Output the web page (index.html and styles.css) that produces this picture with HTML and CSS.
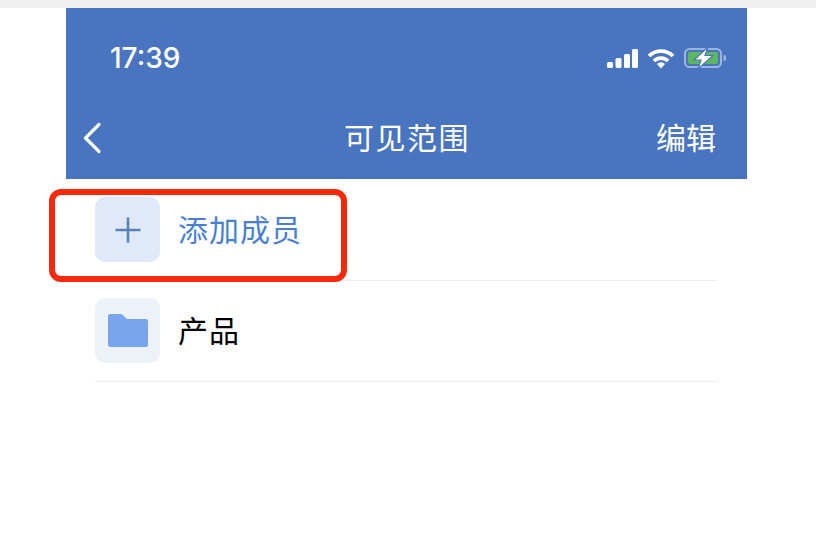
FILE: index.html
```html
<!DOCTYPE html>
<html lang="zh-CN">
<head>
    <meta charset="UTF-8">
    <meta name="viewport" content="width=device-width, initial-scale=1.0">
    <title>可见范围</title>
    <link rel="stylesheet" href="styles.css">
</head>
<body>
    <div class="top-strip"></div>
    <div class="phone">
        <div class="header">
            <div class="status-bar">
                <span class="time">17:39</span>
                <div class="status-icons">
                    <svg width="31" height="19" viewBox="0 0 31 19">
                        <rect x="0" y="13" width="6" height="6" rx="1.5" fill="#fff"/>
                        <rect x="8.5" y="9" width="6" height="10" rx="1.5" fill="#fff"/>
                        <rect x="17" y="5" width="6" height="14" rx="1.5" fill="#fff"/>
                        <rect x="25" y="0" width="6" height="19" rx="1.5" fill="#fff"/>
                    </svg>
                    <svg width="28" height="21" viewBox="0 0 28 21">
                        <path d="M2 8 A17 17 0 0 1 26 8" fill="none" stroke="#fff" stroke-width="3.8"/>
                        <path d="M7 13 A10 10 0 0 1 21 13" fill="none" stroke="#fff" stroke-width="3.8"/>
                        <path d="M10 16 A5.5 5.5 0 0 1 18 16 L14 20.5 Z" fill="#fff"/>
                    </svg>
                    <svg width="42" height="22" viewBox="0 0 42 22">
                        <rect x="1" y="2" width="36" height="18" rx="4.5" fill="none" stroke="#9db4de" stroke-width="2"/>
                        <rect x="4" y="5" width="30" height="12" rx="2" fill="#5cb85c"/>
                        <path d="M39.5 8 a3 3 0 0 1 0 6 z" fill="#9db4de"/>
                        <path d="M24 0 L10 13 H17 L14 22 L29 8.5 H21 Z" fill="#fff" stroke="#4874c0" stroke-width="1.2"/>
                    </svg>
                </div>
            </div>
            <div class="nav-bar">
                <svg class="back" width="20" height="32" viewBox="0 0 20 32">
                    <path d="M17 2.5 L3.5 16 L17 29.5" fill="none" stroke="#fff" stroke-width="3.2" stroke-linecap="round" stroke-linejoin="round"/>
                </svg>
                <span class="title">可见范围</span>
                <span class="edit">编辑</span>
            </div>
        </div>
        <div class="list">
            <div class="row">
                <div class="tile tile-add">
                    <svg width="28" height="28" viewBox="0 0 28 28">
                        <path d="M14 1.5 V26.5 M1.5 14 H26.5" fill="none" stroke="#5b81b5" stroke-width="2.6"/>
                    </svg>
                </div>
                <span class="label label-add">添加成员</span>
            </div>
            <div class="row">
                <div class="tile">
                    <svg width="40" height="33" viewBox="0 0 40 33">
                        <path d="M0 2.5 A2.5 2.5 0 0 1 2.5 0 H13.5 L19 5 H38 A2 2 0 0 1 40 7 V31 A2 2 0 0 1 38 33 H2.5 A2.5 2.5 0 0 1 0 30.5 Z" fill="#78a5ec"/>
                    </svg>
                </div>
                <span class="label">产品</span>
            </div>
        </div>
    </div>
    <div class="highlight"></div>
</body>
</html>
```

FILE: styles.css
```css
* {
    margin: 0;
    padding: 0;
    box-sizing: border-box;
}
html, body {
    height: 100%;
    overflow: hidden;
}
body {
    position: relative;
    background: white;
    font-family: "Noto Sans CJK SC", "Liberation Sans", sans-serif;
}
.top-strip {
    height: 8px;
    background: #f0f0f0;
}
.phone {
    width: 681px;
    margin-left: 66px;
}
.header {
    height: 171px;
    background: #4874c0;
    color: white;
}
.status-bar {
    height: 88px;
    padding: 30px 21px 0 44px;
    display: flex;
    justify-content: space-between;
    align-items: flex-start;
}
.time {
    font-family: Inter, "Liberation Sans", sans-serif;
    font-size: 28px;
    line-height: 40px;
    font-weight: 500;
}
.status-icons {
    display: flex;
    align-items: center;
    gap: 9px;
    height: 40px;
}
.nav-bar {
    height: 83px;
    padding: 0 31px 4px 16px;
    display: flex;
    align-items: center;
    justify-content: space-between;
}
.back {
    margin-top: 4px;
}
.title {
    font-size: 30px;
    letter-spacing: 1.5px;
    margin-left: 56px;
}
.edit {
    font-size: 30px;
}
.list {
    padding: 0 29px;
}
.row {
    height: 102px;
    display: flex;
    align-items: center;
    gap: 18px;
    border-bottom: 1px solid #eceef0;
}
.row + .row {
    height: 101px;
    padding-bottom: 1px;
}
.tile {
    width: 65px;
    height: 65px;
    border-radius: 10px;
    background: #edf1f8;
    display: flex;
    align-items: center;
    justify-content: center;
}
.tile-add {
    background: #dfe9f9;
}
.label {
    font-size: 30px;
    letter-spacing: 1px;
    color: black;
    margin-top: -4px;
}
.label-add {
    color: #4a80d4;
}
/* red marker drawn on top of the screenshot */
.highlight {
    position: absolute;
    left: 49px;
    top: 189px;
    width: 298px;
    height: 93px;
    border: 6px solid #f7290b;
    border-radius: 12px;
}
```
